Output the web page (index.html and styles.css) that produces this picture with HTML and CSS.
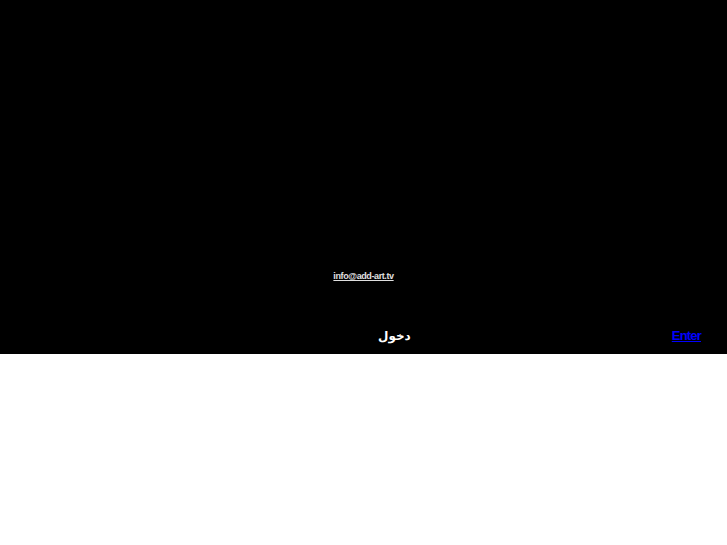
FILE: index.html
```html
<!DOCTYPE html>
<html lang="en">
<head>
<meta charset="utf-8">
<title>add-art</title>
<link rel="stylesheet" href="styles.css">
</head>
<body>
<div class="stage">
  <div class="contact"><a class="mail" href="#">info@add-art.tv</a></div>
  <div class="entry">
    <a class="ar" href="#" lang="ar" dir="rtl">دخول</a>
    <a class="en" href="#">Enter</a>
  </div>
</div>
</body>
</html>
```
FILE: styles.css
```css
html, body {
  margin: 0;
  padding: 0;
  background: #fff;
}
.stage {
  background: #000;
  height: 354px;
  display: flex;
  flex-direction: column;
  font-family: "Liberation Sans", Arial, sans-serif;
}
.contact {
  padding-top: 268px;
  text-align: center;
  line-height: 12px;
}
.mail {
  color: #e0e0e0;
  font-size: 9px;
  font-weight: bold;
  letter-spacing: -0.4px;
  text-decoration: underline;
}
.entry {
  margin-top: 44px;
  display: flex;
  align-items: baseline;
  line-height: 20px;
}
.ar {
  margin-left: 378px;
  color: #fff;
  font-weight: bold;
  font-size: 12px;
  text-decoration: none;
  font-family: "DejaVu Sans", "Noto Sans", sans-serif;
}
.en {
  margin-left: auto;
  margin-right: 26px;
  color: #0000ff;
  font-weight: bold;
  font-size: 13px;
  letter-spacing: -0.8px;
  text-decoration: underline;
}
```
